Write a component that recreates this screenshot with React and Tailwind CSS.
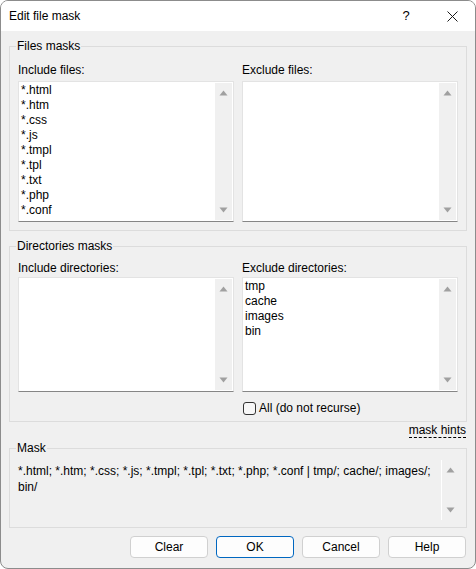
import { useState } from "react";

const FONT = { fontFamily: '"Segoe UI", "Liberation Sans", Arial, sans-serif' };

function Arrow({ down }) {
  return (
    <svg width="9" height="6" viewBox="0 0 9 6" className="block">
      {down ? (
        <path d="M0.5 0.5 H8.5 L4.5 5.5 Z" fill="#a0a0a0" />
      ) : (
        <path d="M4.5 0.5 L8.5 5.5 H0.5 Z" fill="#a0a0a0" />
      )}
    </svg>
  );
}

function ScrollBar({ className = "" }) {
  return (
    <div className={`w-[17px] shrink-0 bg-[#f0f0f0] flex flex-col items-center justify-between pt-[7px] pb-[7px] ${className}`}>
      <Arrow />
      <Arrow down />
    </div>
  );
}

function ListBox({ items = [], height, pad = "pt-[1px]" }) {
  return (
    <div
      className="flex bg-white border border-[#e3e3e3] border-b-[#868686]"
      style={{ height }}
    >
      <div className={`flex-1 pl-[2px] ${pad} text-[12px] leading-[15px] text-black`}>
        {items.map((it) => (
          <div key={it}>{it}</div>
        ))}
      </div>
      <ScrollBar className="my-[1px] mr-[1px]" />
    </div>
  );
}

function Group({ title, children, className = "" }) {
  return (
    <fieldset className={`border border-[#dcdcdc] pl-[6px] pr-[8px] ${className}`}>
      <legend className="text-[12px] leading-[16px] px-[1px]">{title}</legend>
      <div className="pl-[2px]">{children}</div>
    </fieldset>
  );
}

export default function App() {
  const [noRecurse, setNoRecurse] = useState(false);

  return (
    <div
      style={FONT}
      className="w-[476px] h-[569px] bg-[#f0f0f0] border border-[#8c8c8c] rounded-[8px] overflow-hidden flex flex-col text-[12px] text-black"
    >
      {/* title bar */}
      <div className="h-[30px] bg-white flex items-center shrink-0">
        <div className="pl-[8px] flex-1 leading-[16px]">Edit file mask</div>
        <div className="w-[46px] text-center text-[13px] leading-[16px]">?</div>
        <div className="w-[46px] flex items-center justify-center">
          <svg width="11" height="11" viewBox="0 0 11 11">
            <path d="M0.5 0.5 L10.5 10.5 M10.5 0.5 L0.5 10.5" stroke="#1a1a1a" strokeWidth="1" />
          </svg>
        </div>
      </div>

      <div className="px-[8px] pt-[7px] flex flex-col">
        <Group title="Files masks" className="pb-[8px]">
          <div className="grid grid-cols-2 gap-x-[8px]">
            <div>
              <div className="mt-[8px] leading-[16px]">Include files:</div>
              <div className="mt-[3px]">
                <ListBox
                  height={141}
                  items={["*.html", "*.htm", "*.css", "*.js", "*.tmpl", "*.tpl", "*.txt", "*.php", "*.conf"]}
                />
              </div>
            </div>
            <div>
              <div className="mt-[8px] leading-[16px]">Exclude files:</div>
              <div className="mt-[3px]">
                <ListBox height={141} />
              </div>
            </div>
          </div>
        </Group>

        <Group title="Directories masks" className="mt-[7px] pb-[5px]">
          <div className="grid grid-cols-2 gap-x-[8px]">
            <div>
              <div className="mt-[6px] leading-[16px]">Include directories:</div>
              <div className="mt-[1px]">
                <ListBox height={115} />
              </div>
            </div>
            <div>
              <div className="mt-[6px] leading-[16px]">Exclude directories:</div>
              <div className="mt-[1px]">
                <ListBox height={115} pad="pt-[1px]" items={["tmp", "cache", "images", "bin"]} />
              </div>
              <label className="mt-[8px] flex items-center gap-[3px] leading-[16px] pl-[1px]">
                <span
                  onClick={() => setNoRecurse(!noRecurse)}
                  className="w-[13px] h-[13px] border border-[#333333] rounded-[3px] bg-[#f7f7f7] flex items-center justify-center"
                >
                  {noRecurse && (
                    <svg width="9" height="9" viewBox="0 0 9 9">
                      <path d="M1 4.5 L3.5 7 L8 1.5" stroke="#000" fill="none" />
                    </svg>
                  )}
                </span>
                <span>All (do not recurse)</span>
              </label>
            </div>
          </div>
        </Group>

        <div className="flex justify-end leading-[16px] mt-[1px] mb-[2px]">
          <span className="border-b border-dashed border-black leading-[14px] mr-[1px]">mask hints</span>
        </div>

        <Group title="Mask" className="pb-[7px]">
          <div className="flex h-[60px] mt-[4px]">
            <div className="flex-1 pt-[3px] leading-[16px] whitespace-nowrap">
              <div>*.html; *.htm; *.css; *.js; *.tmpl; *.tpl; *.txt; *.php; *.conf | tmp/; cache/; images/;</div>
              <div>bin/</div>
            </div>
            <ScrollBar className="border-l border-white" />
          </div>
        </Group>

        <div className="flex justify-end gap-[8px] mt-[8px] pr-[1px]">
          {["Clear", "OK", "Cancel", "Help"].map((b) => (
            <button
              key={b}
              className={`w-[78px] h-[22px] rounded-[4px] bg-[#fdfdfd] text-[12px] leading-[16px] border ${
                b === "OK" ? "border-[#0067c0]" : "border-[#d0d0d0]"
              }`}
            >
              {b}
            </button>
          ))}
        </div>
      </div>
    </div>
  );
}
